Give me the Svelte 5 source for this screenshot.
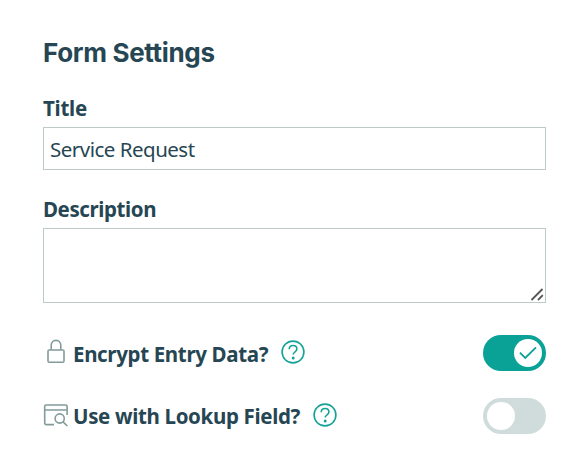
<script>
    let title = "Service Request";
    let description = "";

    let settings = [
        { id: "encrypt", label: "Encrypt Entry Data?", icon: "lock", on: true },
        { id: "lookup", label: "Use with Lookup Field?", icon: "lookup", on: false },
    ];

    function toggle(setting) {
        setting.on = !setting.on;
        settings = settings;
    }
</script>

<div class="form-settings">
    <h2>Form Settings</h2>

    <label class="title-label" for="title">Title</label>
    <input id="title" type="text" bind:value={title} />

    <label class="description-label" for="description">Description</label>
    <div class="textarea-wrap">
        <textarea id="description" bind:value={description}></textarea>
        <svg class="grip" width="14" height="14" viewBox="0 0 14 14">
            <path d="M1.5 12L12.5 1M8 12L12.8 7.2" />
        </svg>
    </div>

    {#each settings as setting}
        <div class="row {setting.id}">
            {#if setting.icon === "lock"}
                <svg class="icon" width="26" height="26" viewBox="0 0 26 26">
                    <rect x="5" y="11" width="16" height="12.3" rx="1.3" />
                    <path d="M8.2 11V6.2a4.8 4.8 0 0 1 9.6 0V11" />
                </svg>
            {:else}
                <svg class="icon" width="26" height="26" viewBox="0 0 26 26">
                    <path d="M11 22.6H3.2a1.5 1.5 0 0 1-1.5-1.5V4.5A1.5 1.5 0 0 1 3.2 3h19.4a1.5 1.5 0 0 1 1.5 1.5V13M1.7 8H24" />
                    <circle cx="16.7" cy="16.5" r="4.6" />
                    <path d="M20 19.8L24.4 24" />
                </svg>
            {/if}
            <span class="row-label">{setting.label}</span>
            <svg class="help" width="24" height="24" viewBox="0 0 24 24">
                <circle cx="12" cy="12" r="10.9" />
                <path d="M8.2 9.2c0-2.4 1.6-3.7 3.8-3.7s3.9 1.3 3.9 3.5c0 2.9-3.7 2.7-3.7 5.6" />
                <circle class="dot" cx="12.2" cy="18" r="1.5" />
            </svg>
            <button
                class="switch {setting.on ? 'on' : ''}"
                role="switch"
                aria-checked={setting.on}
                aria-label={setting.label}
                on:click={() => toggle(setting)}
            >
                <span class="knob">
                    {#if setting.on}
                        <svg width="28" height="28" viewBox="0 0 28 28">
                            <path d="M5.9 13.6L11.3 19L22 8.4" />
                        </svg>
                    {/if}
                </span>
            </button>
        </div>
    {/each}
</div>

<style>
    :global(body) {
        background-color: white;
    }

    .form-settings {
        box-sizing: border-box;
        width: 586px;
        height: 451px;
        padding: 36px 40px 0 43px;
        overflow: hidden;
        color: #264653;
        font-family: "Noto Sans", sans-serif;
        font-size: 20.5px;
    }

    h2 {
        margin: 0;
        font-family: Inter, sans-serif;
        font-size: 26px;
        font-weight: 700;
        line-height: 34px;
        letter-spacing: -0.33px;
        white-space: nowrap;
    }

    label {
        display: block;
        height: 28px;
        font-weight: 700;
        line-height: 28px;
    }
    .title-label {
        margin-top: 24px;
        margin-bottom: 5px;
        letter-spacing: -0.25px;
    }
    .description-label {
        margin-top: 25px;
        margin-bottom: 5px;
        letter-spacing: -0.4px;
    }

    input,
    textarea {
        box-sizing: border-box;
        display: block;
        width: 503px;
        margin: 0;
        border: 1px solid #bccaca;
        border-radius: 0;
        background-color: white;
        color: #264653;
        font-family: inherit;
        font-size: 20.5px;
        outline: none;
    }
    input {
        height: 43px;
        padding: 0 6px;
        letter-spacing: -0.5px;
    }
    textarea {
        height: 75px;
        padding: 6px;
        resize: none;
    }

    .textarea-wrap {
        position: relative;
    }
    .grip {
        position: absolute;
        right: 2px;
        bottom: 1px;
        fill: none;
        stroke: #555;
        stroke-width: 1.8;
    }

    .row {
        display: flex;
        align-items: center;
        height: 36px;
        margin-top: 27px;
    }
    .encrypt {
        margin-top: 32px;
    }

    .icon {
        flex: none;
        margin-top: -2px;
        fill: none;
        stroke: #839c9b;
        stroke-width: 1.6;
    }
    .row-label {
        margin-left: 4px;
        margin-top: 2px;
        font-weight: 700;
        letter-spacing: -0.34px;
        white-space: nowrap;
    }
    .lookup .row-label {
        margin-top: 0;
    }
    .help {
        flex: none;
        margin-left: 13px;
        margin-top: -3px;
        fill: none;
        stroke: #15a397;
        stroke-width: 1.6;
    }
    .help .dot {
        fill: #15a397;
        stroke: none;
    }

    .switch {
        box-sizing: border-box;
        display: flex;
        flex: none;
        align-items: center;
        width: 63px;
        height: 36px;
        margin: 0 0 0 auto;
        padding: 0 4px;
        border: none;
        border-radius: 18px;
        background-color: #d0dbdb;
        cursor: pointer;
    }
    .switch.on {
        justify-content: flex-end;
        background-color: #0aa297;
    }
    .knob {
        display: block;
        width: 28px;
        height: 28px;
        border-radius: 50%;
        background-color: white;
    }
    .knob svg {
        display: block;
        fill: none;
        stroke: #0aa297;
        stroke-width: 1.8;
    }
</style>
